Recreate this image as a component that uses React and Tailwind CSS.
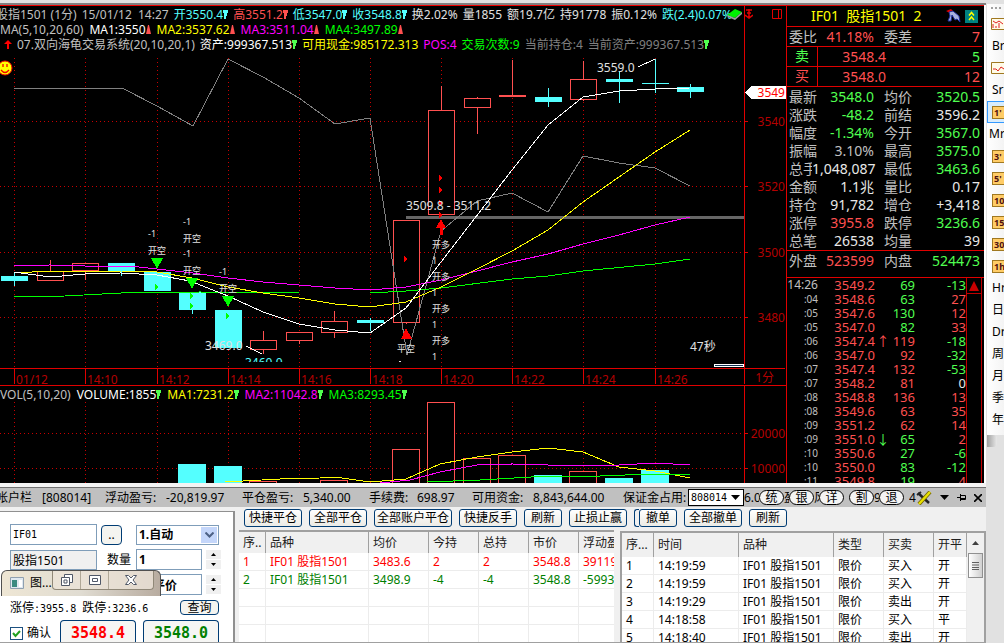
import React, { useState } from 'react';

const GRID_X = [14, 85, 157, 228, 299, 370, 441, 512, 583, 655];
const TIMES = ['01/12', '14:10', '14:12', '14:14', '14:16', '14:18', '14:20', '14:22', '14:24', '14:26'];

// x centre, body top, body bottom, wick top, wick bottom, rising
const CANDLES = [
  [14, 276, 281, 272, 286, false],
  [50, 271, 281, 260, 281, true],
  [85, 263, 271, 263, 280, true],
  [121, 263, 271, 263, 276, false],
  [157, 272, 291, 272, 291, false],
  [192, 292, 310, 292, 314, false],
  [228, 310, 348, 310, 348, false],
  [263, 340, 350, 331, 354, true],
  [299, 332, 341, 332, 344, true],
  [334, 321, 333, 311, 338, true],
  [370, 320, 323, 318, 331, false],
  [406, 220, 323, 220, 324, true],
  [441, 110, 215, 86, 215, true],
  [477, 98, 108, 97, 134, true],
  [512, 95, 97, 60, 97, true],
  [548, 97, 102, 88, 107, false],
  [583, 79, 100, 61, 101, true],
  [619, 79, 82, 72, 103, false],
  [655, 83, 84, 59, 93, false],
  [690, 87, 92, 84, 98, false],
];

const PRICE_LINES = [
  ['#808080', '14,88 122,88 157,106 193,126 228,59 263,77 299,98 335,124 370,118 407,355 441,231 477,201 512,193 548,212 583,156 619,163 655,168 690,186'],
  ['#00ff00', '14,297 65,296 121,293 200,292 299,293 370,293 406,291 441,288 512,279 548,276 583,271 655,264 690,259'],
  ['#ff00ff', '14,266 50,265 85,266 130,266 157,269 193,273 228,278 263,282 299,285 335,288 370,290 406,287 441,280 477,271 512,262 548,254 583,244 619,235 655,225 690,217'],
  ['#ffff00', '14,273 50,271 121,271 157,272 192,278 228,287 263,293 299,298 335,304 370,307 406,302 441,287 477,269 512,251 548,230 583,202 619,177 655,152 690,130'],
  ['#ffffff', '14,272 50,277 85,274 121,273 157,275 190,281 228,296 263,312 299,324 335,330 370,333 406,308 441,262 475,218 512,170 548,125 583,97 619,91 655,89 690,88'],
];

const VOLUMES = [
  [192, 464, false],
  [228, 466, false],
  [263, 481, true],
  [334, 480, true],
  [406, 449, true],
  [441, 402, true],
  [477, 458, true],
  [512, 455, true],
  [548, 475, false],
  [583, 471, true],
  [619, 478, false],
  [655, 470, false],
];

const VOLUME_LINES = [
  ['#ffff00', '225,482 280,479 320,478 335,477 370,482 406,479 440,464 477,457 512,452 548,448 583,452 619,467 655,471 690,478'],
  ['#ff00ff', '380,483 410,480 440,472 477,465 512,464 548,465 619,465 655,463 690,465'],
  ['#00ff00', '427,482 480,480 548,476 600,476 650,474 690,474'],
];

const SIGNALS = [
  [148, 237, '-1'], [148, 254, '开空'],
  [183, 225, '-1'], [183, 242, '开空'], [183, 257, '-1'], [183, 274, '开空'],
  [219, 275, '-1'], [219, 292, '开空'],
  [432, 248, '开多'], [432, 264, '1'], [432, 280, '开多'], [432, 296, '1'],
  [432, 312, '开多'], [432, 328, '1'], [432, 344, '开多'], [432, 360, '1'],
  [397, 352, '平空'],
];

const QUOTES = [
  ['最新', '3548.0', 'text-[#50ff50]', '均价', '3520.5', 'text-[#50ff50]'],
  ['涨跌', '-48.2', 'text-[#50ff50]', '前结', '3596.2', 'text-[#e8e8e8]'],
  ['幅度', '-1.34%', 'text-[#50ff50]', '今开', '3567.0', 'text-[#50ff50]'],
  ['振幅', '3.10%', 'text-[#c0c0c0]', '最高', '3575.0', 'text-[#50ff50]'],
  ['总手', '1,048,087', 'text-[#e8e8e8]', '最低', '3463.6', 'text-[#50ff50]'],
  ['金额', '1.1兆', 'text-[#e8e8e8]', '量比', '0.17', 'text-[#e8e8e8]'],
  ['持仓', '91,782', 'text-[#e8e8e8]', '增仓', '+3,418', 'text-[#e8e8e8]'],
  ['涨停', '3955.8', 'text-[#ff5050]', '跌停', '3236.6', 'text-[#50ff50]'],
  ['总笔', '26538', 'text-[#e8e8e8]', '均量', '39', 'text-[#e8e8e8]'],
];

// time, price, arrow, lots, buying, change
const TICKS = [
  ['14:26', '3549.2', '', '69', false, '-13'],
  [':04', '3548.6', '', '63', false, '27'],
  [':05', '3547.6', '', '130', false, '12'],
  [':05', '3547.0', '', '82', false, '33'],
  [':06', '3547.4', '↑', '119', true, '-18'],
  [':06', '3547.0', '', '92', true, '-32'],
  [':07', '3547.4', '', '132', true, '-53'],
  [':07', '3548.2', '', '81', true, '0'],
  [':08', '3548.8', '', '136', true, '13'],
  [':08', '3549.6', '', '63', true, '35'],
  [':09', '3551.2', '', '62', true, '14'],
  [':09', '3551.0', '↓', '65', false, '2'],
  [':10', '3550.6', '', '27', false, '-6'],
  [':10', '3550.0', '', '83', false, '-12'],
  [':11', '3549.8', '', '19', false, '4'],
];

const POSITIONS = [
  ['1', 'IF01 股指1501', '3483.6', '2', '2', '3548.8', '39119'],
  ['2', 'IF01 股指1501', '3498.9', '-4', '-4', '3548.8', '-59939'],
];

const ORDERS = [
  ['1', '14:19:59', 'IF01 股指1501', '限价', '买入', '开'],
  ['2', '14:19:59', 'IF01 股指1501', '限价', '买入', '开'],
  ['3', '14:19:29', 'IF01 股指1501', '限价', '卖出', '开'],
  ['4', '14:18:58', 'IF01 股指1501', '限价', '买入', '平'],
  ['5', '14:18:40', 'IF01 股指1501', '限价', '卖出', '开'],
];

const Trend = ({ up, className }) => (
  <svg className={`inline-block h-[9px] w-[5px] align-baseline ${className}`} viewBox="0 0 5 9" fill="currentColor">
    {up ? <path d="M2 0h1l2 9H0z" /> : <path d="M0 0h5v3H4v3H3v3H1V3H0z" />}
  </svg>
);

const PriceChart = () => (
  <svg
    className="block h-auto w-full"
    viewBox="0 52 786 334"
    shapeRendering="crispEdges"
    fontSize="12"
    fontFamily="'Noto Sans', 'Noto Sans CJK SC', sans-serif"
  >
    <clipPath id="plot"><rect x="0" y="52" width="744" height="310" /></clipPath>

    <g stroke="#c80000" strokeDasharray="1 3">
      {GRID_X.map((x) => <path key={x} d={`M${x + 0.5} 58V368`} />)}
      {[121, 186, 252, 317].map((y) => <path key={y} d={`M0 ${y + 0.5}H744`} />)}
    </g>

    {CANDLES.map(([x, top, bottom, high, low, rising]) => (
      <g key={x} stroke={rising ? '#ff5050' : '#54ffff'}>
        <path d={`M${x + 0.5} ${high}V${top}M${x + 0.5} ${bottom}V${low}`} />
        {rising
          ? <rect x={x - 12.5} y={top + 0.5} width="26" height={bottom - top - 1} fill="#000" />
          : <rect x={x - 13} y={top} width="27" height={bottom - top} fill="#54ffff" stroke="none" />}
      </g>
    ))}

    <path d="M406 217.5H744" stroke="#666" strokeWidth="3" />
    {PRICE_LINES.map(([color, points]) => (
      <polyline key={color} points={points} fill="none" stroke={color} />
    ))}

    {/* open / close signals */}
    <g fill="#00ff00">
      <path d="M151 258h12l-6 11zM186 278h12l-6 11zM222 296h12l-6 11z" />
      <path d="M155 284l4 3-4 3zM190 293l4 3-4 3zM190 303l4 3-4 3zM226 313l4 3-4 3z" />
    </g>
    <g fill="#ff0000">
      <path d="M441 219l5 9h-3v7h-3v-7h-4zM406 328l6 11h-11z" />
      <path d="M439 175l4 3-4 3zM439 187l4 3-4 3zM439 200l4 3-4 3zM439 212l4 3-4 3zM404 256l4 3-4 3z" />
    </g>
    <g fill="#e0e0e0" fontSize="9">
      {SIGNALS.map(([x, y, label]) => <text key={`${x}-${y}`} x={x} y={y}>{label}</text>)}
    </g>
    <path d="M399 361h2" stroke="#e0e0e0" />

    <g fill="#e0e0e0">
      <text x="597" y="72">3559.0</text>
      <text x="406" y="210">3509.8 - 3511.2</text>
      <text x="205" y="350">3469.0</text>
      <text x="690" y="351">47秒</text>
      <text x="245" y="367" fill="#54ffff" clipPath="url(#plot)">3460.0</text>
    </g>
    <path d="M638 67l17-8M246 346l16 8" stroke="#fff" />
    <path d="M714.5 364.5h29v2h-29z" fill="#103050" stroke="#fff" />

    {/* smiley at the left edge */}
    <g shapeRendering="auto">
      <circle cx="5" cy="68" r="7" fill="#ffff00" stroke="#f00000" />
      <path d="M3 64v3M7 64v3M1 70q4 5 8 0" fill="none" stroke="#f00000" strokeWidth="1.3" />
    </g>

    {/* axes */}
    <path d="M744.5 52V384M0 368.5H785M0 385.5H786" stroke="#e00000" fill="none" />
    <path d="M744 121.5h4M744 186.5h4M744 252.5h4M744 317.5h4" stroke="#e00000" />
    {GRID_X.map((x, i) => (
      <g key={x}>
        <path d={`M${x + 0.5} 368V384`} stroke="#e00000" />
        <text x={x + 2} y="384" fill="#b40000">{TIMES[i]}</text>
      </g>
    ))}
    <g fill="#b40000" textAnchor="end">
      <text x="785" y="126">3540</text>
      <text x="785" y="191">3520</text>
      <text x="785" y="257">3500</text>
      <text x="785" y="322">3480</text>
      <text x="774" y="382">1分</text>
    </g>
    <path d="M745 92l6-6h35v13h-35z" fill="#fff" />
    <text x="785" y="97" fill="#ff0000" textAnchor="end">3549</text>
  </svg>
);

const VolumeChart = () => (
  <svg
    className="block h-auto w-full"
    viewBox="0 402 786 81"
    shapeRendering="crispEdges"
    fontSize="12"
    fontFamily="'Noto Sans', sans-serif"
  >
    <g stroke="#c80000" strokeDasharray="1 3">
      {GRID_X.map((x) => <path key={x} d={`M${x + 0.5} 402V483`} />)}
      <path d="M0 433.5H744M0 468.5H744" />
    </g>
    {VOLUMES.map(([x, y, rising]) => (
      rising
        ? <rect key={x} x={x - 13.5} y={y + 0.5} width="27" height="90" fill="#000" stroke="#ff5050" />
        : <rect key={x} x={x - 14} y={y} width="28" height="90" fill="#54ffff" />
    ))}
    {VOLUME_LINES.map(([color, points]) => (
      <polyline key={color} points={points} fill="none" stroke={color} />
    ))}
    <path d="M744.5 402V483M744 433.5h4M744 468.5h4" stroke="#e00000" />
    <g fill="#b40000" textAnchor="end">
      <text x="785" y="438">20000</text>
      <text x="785" y="473">10000</text>
    </g>
  </svg>
);

const ChartHeader = () => (
  <div className="flex border-t border-[#f00000] text-xs leading-[15px] whitespace-nowrap text-[#c0c0c0]">
    <div className="relative min-w-0 flex-1 overflow-hidden pt-px">
      <div className="-ml-1 flex gap-[5px]">
        <span>股指1501 (1分)</span>
        <span>15/01/12&nbsp; 14:27</span>
        <span className="text-[#54ffff]">开3550.4<Trend /></span>
        <span className="text-[#ff5050]">高3551.2<Trend /></span>
        <span className="text-[#54ffff]">低3547.0<Trend /></span>
        <span className="text-[#54ffff]">收3548.8<Trend /></span>
        <span className="text-[#e0e0e0]">换2.02%</span>
        <span className="text-[#e0e0e0]">量1855</span>
        <span className="text-[#e0e0e0]">额19.7亿</span>
        <span className="text-[#e0e0e0]">持91778</span>
        <span className="text-[#e0e0e0]">振0.12%</span>
        <span className="text-[#54ffff]">跌(2.4)0.07%</span>
      </div>
      <div className="flex gap-1.5">
        <span>MA(5,10,20,60)</span>
        <span className="text-white">MA1:3550<Trend up className="text-[#ff5050]" /></span>
        <span className="text-[#ffff00]">MA2:3537.62<Trend up className="text-[#ff5050]" /></span>
        <span className="text-[#ff00ff]">MA3:3511.04<Trend up className="text-[#ff5050]" /></span>
        <span className="text-[#00ff00]">MA4:3497.89<Trend up className="text-[#ff5050]" /></span>
      </div>
      <div className="flex items-center gap-[5px] pl-1">
        <svg className="h-[9px] w-2" viewBox="0 0 8 9" fill="#ff0000"><path d="M4 0l4 4H5v5H3V4H0z" /></svg>
        <span>07.双向海龟交易系统(20,10,20,1)</span>
        <span className="text-white">资产:999367.513<Trend className="text-[#50ff50]" /></span>
        <span className="text-[#ffff00]">可用现金:985172.313</span>
        <span className="text-[#ff00ff]">POS:4</span>
        <span className="text-[#00ff00]">交易次数:9</span>
        <span className="text-[#808080]">当前持仓:4</span>
        <span className="text-[#808080]">当前资产:999367.513<Trend className="text-[#50ff50]" /></span>
      </div>
      <svg className="absolute top-[3px] right-0.5 h-3 w-4" viewBox="0 0 16 12">
        <path d="M1 6l8-6 7 3-7 6z" fill="#00f000" />
        <path d="M1 6l8 3 7-6v2l-7 6-7-3z" fill="#a0a0a0" />
      </svg>
    </div>
    <div className="flex w-[42px] items-start justify-between border-l border-[#e00000] pt-[3px] pr-1">
      <svg className="h-2.5 w-2" viewBox="0 0 8 10" fill="none" stroke="#e00000" strokeWidth="1.5">
        <path d="M1 1h6M4 0v9M2 4h4M0 6l4 3 4-3" />
      </svg>
      <svg className="h-2.5 w-2.5" viewBox="0 0 10 10" fill="none" stroke="#e00000">
        <path d="M.5.5h9v9h-9zM6.500.5v9" />
      </svg>
    </div>
  </div>
);

const VolumeHeader = () => (
  <div className="flex h-4 text-xs leading-[18px] whitespace-nowrap">
    <div className="flex min-w-0 flex-1 gap-1.5">
      <span className="text-[#c0c0c0]">VOL(5,10,20)</span>
      <span className="text-white">VOLUME:1855<Trend className="text-[#50ff50]" /></span>
      <span className="text-[#ffff00]">MA1:7231.2<Trend className="text-[#50ff50]" /></span>
      <span className="text-[#ff00ff]">MA2:11042.8<Trend className="text-[#50ff50]" /></span>
      <span className="text-[#00ff00]">MA3:8293.45<Trend className="text-[#50ff50]" /></span>
    </div>
    <div className="w-[42px] border-l border-[#e00000]" />
  </div>
);

const changeColor = (value) => {
  if (value === '0') return 'text-[#e8e8e8]';
  return value.startsWith('-') ? 'text-[#50ff50]' : 'text-[#ff5050]';
};

const QuotePanel = () => (
  <aside className="flex w-[200px] shrink-0 flex-col border-r-2 border-white bg-black text-sm leading-[18px]">
    <div className="flex grow flex-col border-t border-l border-[#e00000] text-[#c0c0c0]">
      <div className="mr-0.5 flex h-[21px] items-center border-b border-[#e00000] pl-6 text-[#ffff00]">
        <span className="flex-1 whitespace-pre">IF01  股指1501  2</span>
        <svg className="mr-1 h-3.5 w-4" viewBox="0 0 16 14">
          <path d="M1 2l5-2 2 2-3 2z" fill="#e00000" />
          <path d="M4 3l4-1 6 5 1 6-3-3-2 1-3-5-1 6H3l2-5z" fill="#a8b0e0" stroke="#2030a0" />
        </svg>
        <svg className="mr-1 h-[13px] w-[13px]" viewBox="0 0 13 13">
          <path d="M0 0h13v13H0z" fill="#008080" />
          <path d="M4 5.500l2.500-3 2.500 3M4 10l2.500-3 2.500 3" fill="none" stroke="#ffff00" strokeWidth="1.500" />
        </svg>
      </div>
      <div className="mr-0.5 flex h-5 items-center border-b border-[#e00000] pr-0.5 pl-0.5">
        <span className="w-8">委比</span>
        <span className="w-[53px] text-right text-[#ff5050]">41.18%</span>
        <span className="ml-2.5">委差</span>
        <span className="flex-1 text-right text-[#ff5050]">7</span>
      </div>
      <div className="mr-0.5 flex h-5 items-center border-b border-[#e00000] pr-0.5">
        <span className="w-[31px] self-stretch border-r border-[#e00000] text-center text-[#50ff50]">卖</span>
        <span className="w-[68px] text-right text-[#ff5050]">3548.4</span>
        <span className="flex-1 text-right text-[#50ff50]">5</span>
      </div>
      <div className="mr-0.5 flex h-5 items-center border-b border-[#e00000] pr-0.5 text-[#ff5050]">
        <span className="w-[31px] self-stretch border-r border-[#e00000] text-center">买</span>
        <span className="w-[68px] text-right">3548.0</span>
        <span className="flex-1 text-right">12</span>
      </div>
      <div className="pt-px">
        {QUOTES.map(([label, value, color, label2, value2, color2]) => (
          <div key={label} className="flex h-[18px] items-center pr-1 pl-0.5">
            <span className="w-[23px] whitespace-nowrap">{label}</span>
            <span className={`z-10 w-[62px] text-right ${color}`}><span className="bg-black">{value}</span></span>
            <span className="ml-2.5">{label2}</span>
            <span className={`flex-1 text-right ${color2}`}>{value2}</span>
          </div>
        ))}
      </div>
      <div className="flex h-[28px] border-y border-[#e00000] pt-px pr-1 pl-0.5">
        <span className="w-8">外盘</span>
        <span className="w-[53px] text-right text-[#ff5050]">523599</span>
        <span className="ml-2.5">内盘</span>
        <span className="flex-1 text-right text-[#50ff50]">524473</span>
      </div>
      <div className="flex h-0 grow overflow-hidden">
        <div className="flex-1 text-[13px] leading-[14px]">
          {TICKS.map(([time, price, arrow, lots, buying, change], i) => (
            <div key={i} className="flex h-[14px]">
              <span className={i === 0 ? 'w-[31px] text-right text-xs leading-[14px]' : 'w-[31px] text-right text-[10px] leading-[14px]'}>{time}</span>
              <span className="w-[57px] text-right text-[#ff5050]">{price}</span>
              <span className={`w-4 text-center ${buying ? 'text-[#ff5050]' : 'text-[#50ff50]'}`}>{arrow}</span>
              <span className={`w-6 text-right ${buying ? 'text-[#ff5050]' : 'text-[#50ff50]'}`}>{lots}</span>
              <span className={`flex-1 text-right ${changeColor(change)}`}>{change}</span>
            </div>
          ))}
        </div>
        <div className="mr-0.5 w-4 border-x border-[#c00000]">
          <button type="button" aria-label="上翻" className="flex h-4 w-full items-center justify-center border-b border-[#c00000]">
            <svg className="h-2.5 w-2.5" viewBox="0 0 10 10"><path d="M5 0l5 10H0z" fill="#c80000" /></svg>
          </button>
        </div>
      </div>
    </div>
  </aside>
);

const PeriodIcon = ({ children }) => (
  <span className="ml-1 block h-[13px] w-5 shrink-0 border border-[#a07820] bg-[#ffcc66] pl-px text-[9px] leading-[11px] font-bold text-[#501010]">
    {children}
  </span>
);

const PERIODS = ['~', 'Br', '~~', 'Sr', "1'", 'Mr', "3'", "5'", "10'", "15'", "30'", '1h', 'Hr', '日', 'Dr', '周', '月', '季', '年'];

const PeriodBar = () => (
  <nav className="w-[18px] shrink-0 overflow-hidden bg-[#e1e1e1] pl-px text-xs text-black">
    <div className="h-1" />
    <div className="bg-gradient-to-r from-white to-[#f4f4f4] pb-1">
      <svg className="block h-[9px] w-full" viewBox="0 0 17 9" fill="#a0a0a0">
        <path d="M4 3h2v2H4zM8 3h2v2H8zM12 3h2v2h-2z" />
      </svg>
      {PERIODS.map((name) => (
        <button
          key={name}
          type="button"
          aria-label={name}
          className={`flex h-[22px] w-full items-center overflow-hidden border text-left whitespace-nowrap ${name === "1'" ? 'border-r-0 border-[#3399ff] bg-[#d8ecfc]' : 'border-r-0 border-transparent'}`}
        >
          {name.startsWith('~') && (
            <svg className="ml-[3px] h-3 w-4 shrink-0" viewBox="0 0 16 12">
              <path d="M.5.500h15v11H.5z" fill="#fffbe8" stroke="#a07820" />
              {name === '~'
                ? <path d="M2 10V6M5 10V8M8 10V5M2 3l3 2 3-2 4 3" fill="none" stroke="#e02020" />
                : <path d="M2 7h3l2 2 3-4 3 2" fill="none" stroke="#e02020" />}
            </svg>
          )}
          {/['h]/.test(name) && <PeriodIcon>{name}</PeriodIcon>}
          {/^[A-Z日周月季年]/.test(name) && <span className={name === 'Mr' ? 'ml-px' : 'ml-1'}>{name}</span>}
        </button>
      ))}
    </div>
    <div className="h-3 w-2.5 rounded-r bg-gradient-to-r from-[#a0a0a0] to-[#e8e8e8]" />
  </nav>
);

const PILLS = [['统', '盈'], ['银', '风'], ['详', ''], ['割', '9'], ['退', '']];

const AccountBar = () => (
  <div className="flex h-5 items-center border-t border-[#707070] bg-[#c0c0c0] text-xs leading-4 whitespace-nowrap text-black">
    <div className="-ml-1 flex min-w-0 flex-1 overflow-hidden">
      <span className="w-[46px]">帐户栏</span>
      <span className="w-[63px]">[808014]</span>
      <span className="w-[61px]">浮动盈亏:</span>
      <span className="w-[76px]">-20,819.97</span>
      <span className="w-[61px]">平仓盈亏:</span>
      <span className="w-[66px]">5,340.00</span>
      <span className="w-[48px]">手续费:</span>
      <span className="w-[55px]">698.97</span>
      <span className="w-[61px]">可用资金:</span>
      <span className="w-[90px]">8,843,644.00</span>
      <span>保证金占用:</span>
    </div>
    <div className="relative">
      <select aria-label="账户" className="h-[17px] w-14 appearance-none border border-black bg-white pl-0.5 font-['DejaVu_Sans_Mono',monospace] text-[10px] leading-[14px]">
        <option>808014</option>
      </select>
      <svg className="pointer-events-none absolute top-1.5 right-1 h-[5px] w-[9px]" viewBox="0 0 9 5"><path d="M0 0h9L4.500 5z" /></svg>
    </div>
    <span className="w-[15px] overflow-hidden">6.0</span>
    {PILLS.map(([name, tail]) => (
      <React.Fragment key={name}>
        <button type="button" className="h-[15px] w-[25px] rounded-full border border-black bg-[#f4f4f4] text-center leading-[13px]">{name}</button>
        <span className="w-[5px] overflow-hidden">{tail}</span>
      </React.Fragment>
    ))}
    <span className="w-[7px] overflow-hidden">4.</span>
    <button type="button" aria-label="设置">
      <svg className="h-3.5 w-4" viewBox="0 0 16 14" fill="none">
        <path d="M2 2l11 10" stroke="#222" strokeWidth="2.500" />
        <path d="M1 4l4-3" stroke="#222" strokeWidth="2" />
        <path d="M14 1L3 13" stroke="#706000" strokeWidth="4" />
        <path d="M14 1L3 13" stroke="#e8e000" strokeWidth="2.500" />
      </svg>
    </button>
    <button type="button" aria-label="菜单" className="ml-2">
      <svg className="h-[5px] w-[9px]" viewBox="0 0 9 5"><path d="M0 0h9L4.500 5z" /></svg>
    </button>
    <button type="button" aria-label="固定" className="ml-2">
      <svg className="h-[9px] w-[9px]" viewBox="0 0 9 9" fill="none" stroke="#000"><path d="M0 4.500h3M3.500 1v7M3.500 2.500h5v4h-5M4 5.500h5" /></svg>
    </button>
    <button type="button" aria-label="关闭" className="mr-1 ml-2">
      <svg className="h-2 w-2" viewBox="0 0 8 8" fill="none" stroke="#000" strokeWidth="1.600"><path d="M0 0l8 8M8 0L0 8" /></svg>
    </button>
  </div>
);

const Spinner = ({ label }) => (
  <span className="ml-1 flex h-[19px] w-[15px] flex-col bg-[#f0f0f0]">
    <button type="button" aria-label={`${label}加`} className="flex flex-1 items-center justify-center">
      <svg className="h-[3px] w-[5px]" viewBox="0 0 5 3"><path d="M2.500 0L5 3H0z" /></svg>
    </button>
    <button type="button" aria-label={`${label}减`} className="flex flex-1 items-center justify-center border-t border-white">
      <svg className="h-[3px] w-[5px]" viewBox="0 0 5 3"><path d="M0 0h5L2.500 3z" /></svg>
    </button>
  </span>
);

const FloatingWindow = () => (
  <div className="absolute top-[58px] left-px flex h-[26px] w-40 items-start rounded-t-md border border-b-0 border-[#505050] bg-gradient-to-r from-[#eee6d4] via-[#e0dcd2] to-[#b8aca0] pl-2 text-xs">
    <svg className="mt-1.5 h-3 w-3.5" viewBox="0 0 14 12">
      <path d="M.5.5h13v11H.5z" fill="#dfe8f0" stroke="#90a0b0" />
      <path d="M2 3h5v7H2z" fill="#3a8a80" />
      <path d="M9 3h3v7H9z" fill="#fff" />
    </svg>
    <span className="mt-1 ml-1.5 w-[22px] leading-4">图...</span>
    <div className="flex h-[19px] w-[102px] rounded-b border border-t-0 border-[#908878] bg-[#ece4d8]/80">
      <button type="button" aria-label="还原" className="flex w-7 items-center justify-center border-r border-[#b0a898]">
        <svg className="h-3 w-3" viewBox="0 0 12 12" fill="#fff" stroke="#505868"><path d="M3.500.5h8v8h-8z" /><path d="M.5 3.500h8v8h-8z" /><path d="M3 6h3v3H3z" /></svg>
      </button>
      <button type="button" aria-label="最大化" className="flex w-7 items-center justify-center border-r border-[#b0a898]">
        <svg className="h-2.5 w-3" viewBox="0 0 12 10" fill="#fff" stroke="#505868"><path d="M.5.500h11v9H.5zM3.500 3.500h5v3h-5z" /></svg>
      </button>
      <button type="button" aria-label="关闭窗口" className="flex flex-1 items-center justify-center">
        <svg className="h-2.5 w-3" viewBox="0 0 12 10" fill="#fff" stroke="#505868"><path d="M.5.5h3L6 3l2.500-2.500h3L8 5l3.500 4.500h-3L6 7 3.500 9.500h-3L4 5z" /></svg>
      </button>
    </div>
  </div>
);

const OrderForm = () => {
  const [code, setCode] = useState('IF01');
  const [lots, setLots] = useState('1');
  const [confirm, setConfirm] = useState(true);

  return (
    <form className="relative mt-0.5 flex w-[235px] shrink-0 flex-col gap-1 border-t border-r-2 border-[#909090] bg-white px-2.5 pt-3 text-xs text-black" onSubmit={(e) => e.preventDefault()}>
      <div className="flex h-[21px] items-center">
        <input aria-label="代码" className="h-[21px] w-[87px] border border-[#7f9db9] bg-white px-0.5 font-['DejaVu_Sans_Mono',monospace] text-[10px]" value={code} onChange={(e) => setCode(e.target.value)} />
        <button type="button" className="ml-1 h-5 w-[21px] rounded border border-[#003c74] bg-[#f4f4f0]">..</button>
        <div className="relative ml-3.5">
          <select aria-label="模式" className="h-5 w-[83px] appearance-none border border-[#7f9db9] bg-white pl-0.5 text-xs font-bold">
            <option>1.自动</option>
          </select>
          <span className="pointer-events-none absolute top-0.5 right-0.5 flex h-4 w-4 items-center justify-center bg-[#c4d6fa]">
            <svg className="h-1.5 w-[9px]" viewBox="0 0 9 6" fill="none" stroke="#4d6185" strokeWidth="2"><path d="M.5.5l4 4 4-4" /></svg>
          </span>
        </div>
      </div>
      <div className="flex h-[21px] items-center">
        <input aria-label="品种" readOnly className="h-5 w-[87px] border border-[#7f9db9] bg-[#f0f0f0] px-0.5 text-xs" value="股指1501" />
        <label htmlFor="lots" className="ml-2.5 w-[29px]">数量</label>
        <input id="lots" className="h-[21px] w-[66px] border border-[#7f9db9] bg-white px-0.5 text-xs font-bold" value={lots} onChange={(e) => setLots(e.target.value)} />
        <Spinner label="数量" />
      </div>
      <div className="flex h-[21px] items-center">
        <input aria-label="价格" readOnly className="ml-[126px] h-[21px] w-[66px] border border-[#7f9db9] bg-white pl-4 text-xs font-bold" value="平价" />
        <Spinner label="价格" />
      </div>
      <div className="flex h-[17px] items-center justify-between">
        <span className="whitespace-nowrap">
          涨停<span className="font-['DejaVu_Sans_Mono',monospace] text-[10px]">:3955.8 </span>
          跌停<span className="font-['DejaVu_Sans_Mono',monospace] text-[10px]">:3236.6</span>
        </span>
        <button type="button" className="mr-1 h-[15px] w-[39px] rounded-sm border border-[#003c74] bg-[#f4f4f0] leading-[13px]">查询</button>
      </div>
      <div className="flex h-[22px] items-start">
        <label className="flex w-[50px] items-center gap-1 pt-1.5">
          <span className="relative h-[13px] w-[13px]">
            <input type="checkbox" className="block h-[13px] w-[13px] appearance-none border border-[#1c5180] bg-white" checked={confirm} onChange={(e) => setConfirm(e.target.checked)} />
            {confirm && (
              <svg className="pointer-events-none absolute inset-0" viewBox="0 0 13 13" fill="none" stroke="#21a121" strokeWidth="2"><path d="M3 6l2.500 3L10 4" /></svg>
            )}
          </span>
          <span className="leading-[14px]">确认</span>
        </label>
        <button type="button" className="h-[22px] w-[76px] rounded-t border border-b-0 border-[#003c74] bg-[#f6f6f4] pt-0.5 font-['DejaVu_Sans_Mono',monospace] text-[15px] leading-[20px] font-bold text-[#ff0000]">3548.4</button>
        <button type="button" className="ml-[7px] h-[22px] w-[76px] rounded-t border border-b-0 border-[#003c74] bg-[#f6f6f4] pt-0.5 font-['DejaVu_Sans_Mono',monospace] text-[15px] leading-[20px] font-bold text-[#008000]">3548.0</button>
      </div>
      <FloatingWindow />
    </form>
  );
};

const ToolButton = ({ width, children }) => (
  <button type="button" className={`h-[18px] shrink-0 rounded-[3px] border border-[#003c74] bg-gradient-to-b from-white to-[#ecebe5] text-center text-xs leading-4 whitespace-nowrap ${width}`}>
    {children}
  </button>
);

const HEAD_CELL = 'border-r border-[#a0a0a0] px-1 text-left font-normal';
const BODY_CELL = 'border-r border-b border-[#ececec] px-1';

const PositionsTable = () => (
  <div className="min-w-0 flex-1 overflow-hidden border-t-2 border-[#a0a0a0] bg-white">
    <table className="w-[400px] table-fixed border-separate border-spacing-0 text-xs whitespace-nowrap">
      <colgroup>
        <col className="w-[27px]" /><col className="w-[103px]" /><col className="w-[60px]" /><col className="w-[50px]" />
        <col className="w-[50px]" /><col className="w-[50px]" /><col className="w-[60px]" />
      </colgroup>
      <thead>
        <tr className="h-[21px] bg-[#f0f0f0] text-[#202020]">
          {['序..', '品种', '均价', '今持', '总持', '市价', '浮动盈亏'].map((name) => (
            <th key={name} className={HEAD_CELL}>{name}</th>
          ))}
        </tr>
      </thead>
      <tbody>
        {POSITIONS.map((row, i) => (
          <tr key={row[0]} className={i === 0 ? 'h-[18px] text-[#ff0000]' : 'h-[18px] text-[#008000]'}>
            {row.map((cell, j) => <td key={j} className={BODY_CELL}>{cell}</td>)}
          </tr>
        ))}
        {[0, 1, 2].map((n) => (
          <tr key={n} className="h-[18px]">
            {POSITIONS[0].map((_, j) => <td key={j} className={BODY_CELL} />)}
          </tr>
        ))}
      </tbody>
    </table>
  </div>
);

const OrdersTable = () => (
  <div className="mt-px ml-1.5 flex w-[366px] shrink-0 overflow-hidden border-2 border-b-0 border-[#a0a0a0] bg-white">
    <table className="w-[345px] table-fixed border-separate border-spacing-0 self-start text-xs whitespace-nowrap text-black">
      <colgroup>
        <col className="w-[32px]" /><col className="w-[85px]" /><col className="w-[95px]" />
        <col className="w-[50px]" /><col className="w-[50px]" /><col className="w-[33px]" />
      </colgroup>
      <thead>
        <tr className="h-6 bg-[#f0f0f0] text-[#202020]">
          {['序...', '时间', '品种', '类型', '买卖', '开平'].map((name) => (
            <th key={name} className={HEAD_CELL}>{name}</th>
          ))}
        </tr>
      </thead>
      <tbody>
        {ORDERS.map((row) => (
          <tr key={row[0]} className="h-[18px]">
            {row.map((cell, j) => <td key={j} className={BODY_CELL}>{cell}</td>)}
          </tr>
        ))}
      </tbody>
    </table>
    <div className="flex flex-1 flex-col items-center bg-[#f0f0f0]">
      <svg className="my-2 h-1 w-[7px] shrink-0" viewBox="0 0 7 4"><path d="M3.500 0L7 4H0z" fill="#404040" /></svg>
      <div className="flex h-[25px] w-[15px] shrink-0 items-center justify-center border border-[#909090] bg-gradient-to-r from-white to-[#d0d0d0]">
        <svg className="h-2 w-[7px]" viewBox="0 0 7 8" stroke="#606060"><path d="M0 .5h7M0 3h7M0 5.500h7M0 7.500h7" /></svg>
      </div>
    </div>
  </div>
);

const App = () => (
  <div className="flex w-full bg-[#e1e1e1] font-['Noto_Sans','Noto_Sans_CJK_SC',sans-serif]">
    <div className="min-w-0 flex-1">
      <div className="h-[5px] border-b-2 border-[#808080] bg-[#e1e1e1]" />
      <main className="flex bg-black">
        <div className="min-w-0 flex-1">
          <ChartHeader />
          <PriceChart />
          <VolumeHeader />
          <VolumeChart />
        </div>
        <QuotePanel />
      </main>
      <div className="h-1 bg-[#f4f4f4]" />
      <AccountBar />
      <div className="flex border-b-2 border-[#a0a0a0] bg-[#f0f0f0] pt-0.5">
        <OrderForm />
        <div className="ml-1 flex min-w-0 flex-1 flex-col">
          <div className="mb-[3px] flex gap-[7px] overflow-hidden pl-[5px] text-black">
            <ToolButton width="w-[58px]">快捷平仓</ToolButton>
            <ToolButton width="w-[58px]">全部平仓</ToolButton>
            <ToolButton width="w-[78px]">全部账户平仓</ToolButton>
            <ToolButton width="w-[58px]">快捷反手</ToolButton>
            <ToolButton width="w-[38px]">刷新</ToolButton>
            <ToolButton width="w-[58px]">止损止赢</ToolButton>
            <div className="flex">
              <span className="h-[18px] w-[5px] rounded-l-[3px] border border-r-0 border-[#003c74]" />
              <ToolButton width="w-[38px]">撤单</ToolButton>
            </div>
            <ToolButton width="w-[58px]">全部撤单</ToolButton>
            <ToolButton width="w-[38px]">刷新</ToolButton>
          </div>
          <div className="flex h-0 grow overflow-hidden">
            <PositionsTable />
            <OrdersTable />
          </div>
        </div>
      </div>
    </div>
    <PeriodBar />
  </div>
);

export default App;
